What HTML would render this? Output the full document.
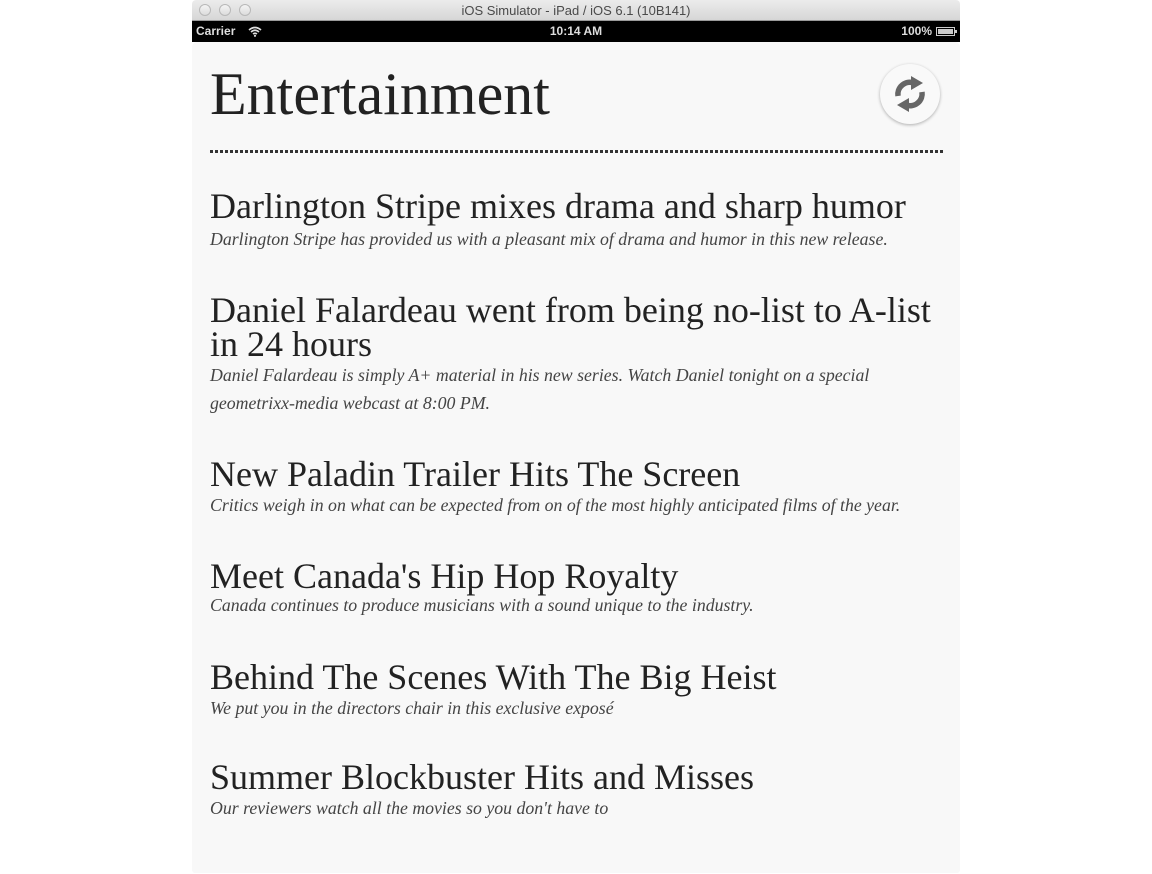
<!DOCTYPE html>
<html><head><meta charset="utf-8"><style>
*{margin:0;padding:0;box-sizing:border-box}
body{width:1152px;height:874px;background:#fff;position:relative;overflow:hidden;font-family:"Liberation Serif",serif}
.tb{position:absolute;left:192px;top:0;width:768px;height:21px;background:linear-gradient(#ececec,#d6d6d6);border-radius:4px 4px 0 0;border-bottom:1px solid #9a9a9a;font-family:"Liberation Sans",sans-serif;font-size:13px;color:#4a4a4a;text-align:center;line-height:21px}
.dot{position:absolute;top:4px;width:12px;height:12px;border-radius:50%;border:1px solid #b8b8b8;background:linear-gradient(#f4f4f4,#dcdcdc)}
.sb{position:absolute;left:192px;top:21px;width:768px;height:21px;background:#000;color:#ddd;font-family:"Liberation Sans",sans-serif;font-weight:bold;font-size:12px;line-height:21px}
.ct{position:absolute;left:192px;top:42px;width:768px;height:831px;background:#f8f8f8;border-radius:5px 5px 3px 3px}
.a{position:absolute;left:210px;white-space:nowrap}
.h{font-size:36px;line-height:36px;color:#222}
.s{font-size:17.8px;line-height:18px;font-style:italic;color:#444}
</style></head><body>
<div class="tb"><span class="dot" style="left:7px"></span><span class="dot" style="left:27px"></span><span class="dot" style="left:47px"></span>iOS Simulator - iPad / iOS 6.1 (10B141)</div>
<div class="sb"><span style="position:absolute;left:4px">Carrier</span>
<svg style="position:absolute;left:56px;top:5px" width="14" height="11" viewBox="0 0 14 11"><path d="M1 4Q7-1 13 4M3 6Q7 2.5 11 6M5 8Q7 6.5 9 8" stroke="#ddd" stroke-width="1.6" fill="none"/><circle cx="7" cy="9.8" r="1.1" fill="#ddd"/></svg>
<span style="position:absolute;left:0;width:768px;text-align:center">10:14 AM</span>
<span style="position:absolute;right:28px">100%</span>
<span style="position:absolute;right:5px;top:6px;width:19px;height:9px;border:1px solid #ccc;padding:1px"><span style="display:block;width:100%;height:100%;background:#ccc"></span></span>
<span style="position:absolute;right:3px;top:9px;width:2px;height:3px;background:#ccc"></span></div>
<div class="ct"></div>
<div class="a" style="top:64px;font-size:60px;line-height:60px;color:#222">Entertainment</div>
<div style="position:absolute;left:880px;top:64px;width:60px;height:60px;border-radius:50%;background:#f9f9f9;box-shadow:0 1px 3px rgba(0,0,0,.3)">
<svg width="60" height="60" viewBox="0 0 60 60"><g fill="none" stroke="#666" stroke-width="5.5"><path d="M18 32 A12 12 0 0 1 34 19"/><path d="M42 28 A12 12 0 0 1 26 41"/></g><path d="M31 12 L43 19 L31 26Z" fill="#666"/><path d="M29 34 L17 41 L29 48Z" fill="#666"/></svg></div>
<div style="position:absolute;left:210px;top:150px;width:733px;height:3px;background-image:repeating-linear-gradient(90deg,#333 0 3px,transparent 3px 5px)"></div>
<div class="a h" style="top:188px">Darlington Stripe mixes drama and sharp humor</div>
<div class="a s" style="top:230px">Darlington Stripe has provided us with a pleasant mix of drama and humor in this new release.</div>
<div class="a h" style="top:292px">Daniel Falardeau went from being no-list to A-list</div>
<div class="a h" style="top:326px">in 24 hours</div>
<div class="a s" style="top:366px">Daniel Falardeau is simply A+ material in his new series. Watch Daniel tonight on a special</div>
<div class="a s" style="top:394px">geometrixx-media webcast at 8:00 PM.</div>
<div class="a h" style="top:456px">New Paladin Trailer Hits The Screen</div>
<div class="a s" style="top:496px">Critics weigh in on what can be expected from on of the most highly anticipated films of the year.</div>
<div class="a h" style="top:558px">Meet Canada's Hip Hop Royalty</div>
<div class="a s" style="top:596px">Canada continues to produce musicians with a sound unique to the industry.</div>
<div class="a h" style="top:659px">Behind The Scenes With The Big Heist</div>
<div class="a s" style="top:699px">We put you in the directors chair in this exclusive exposé</div>
<div class="a h" style="top:759px">Summer Blockbuster Hits and Misses</div>
<div class="a s" style="top:799px">Our reviewers watch all the movies so you don't have to</div>
</body></html>
